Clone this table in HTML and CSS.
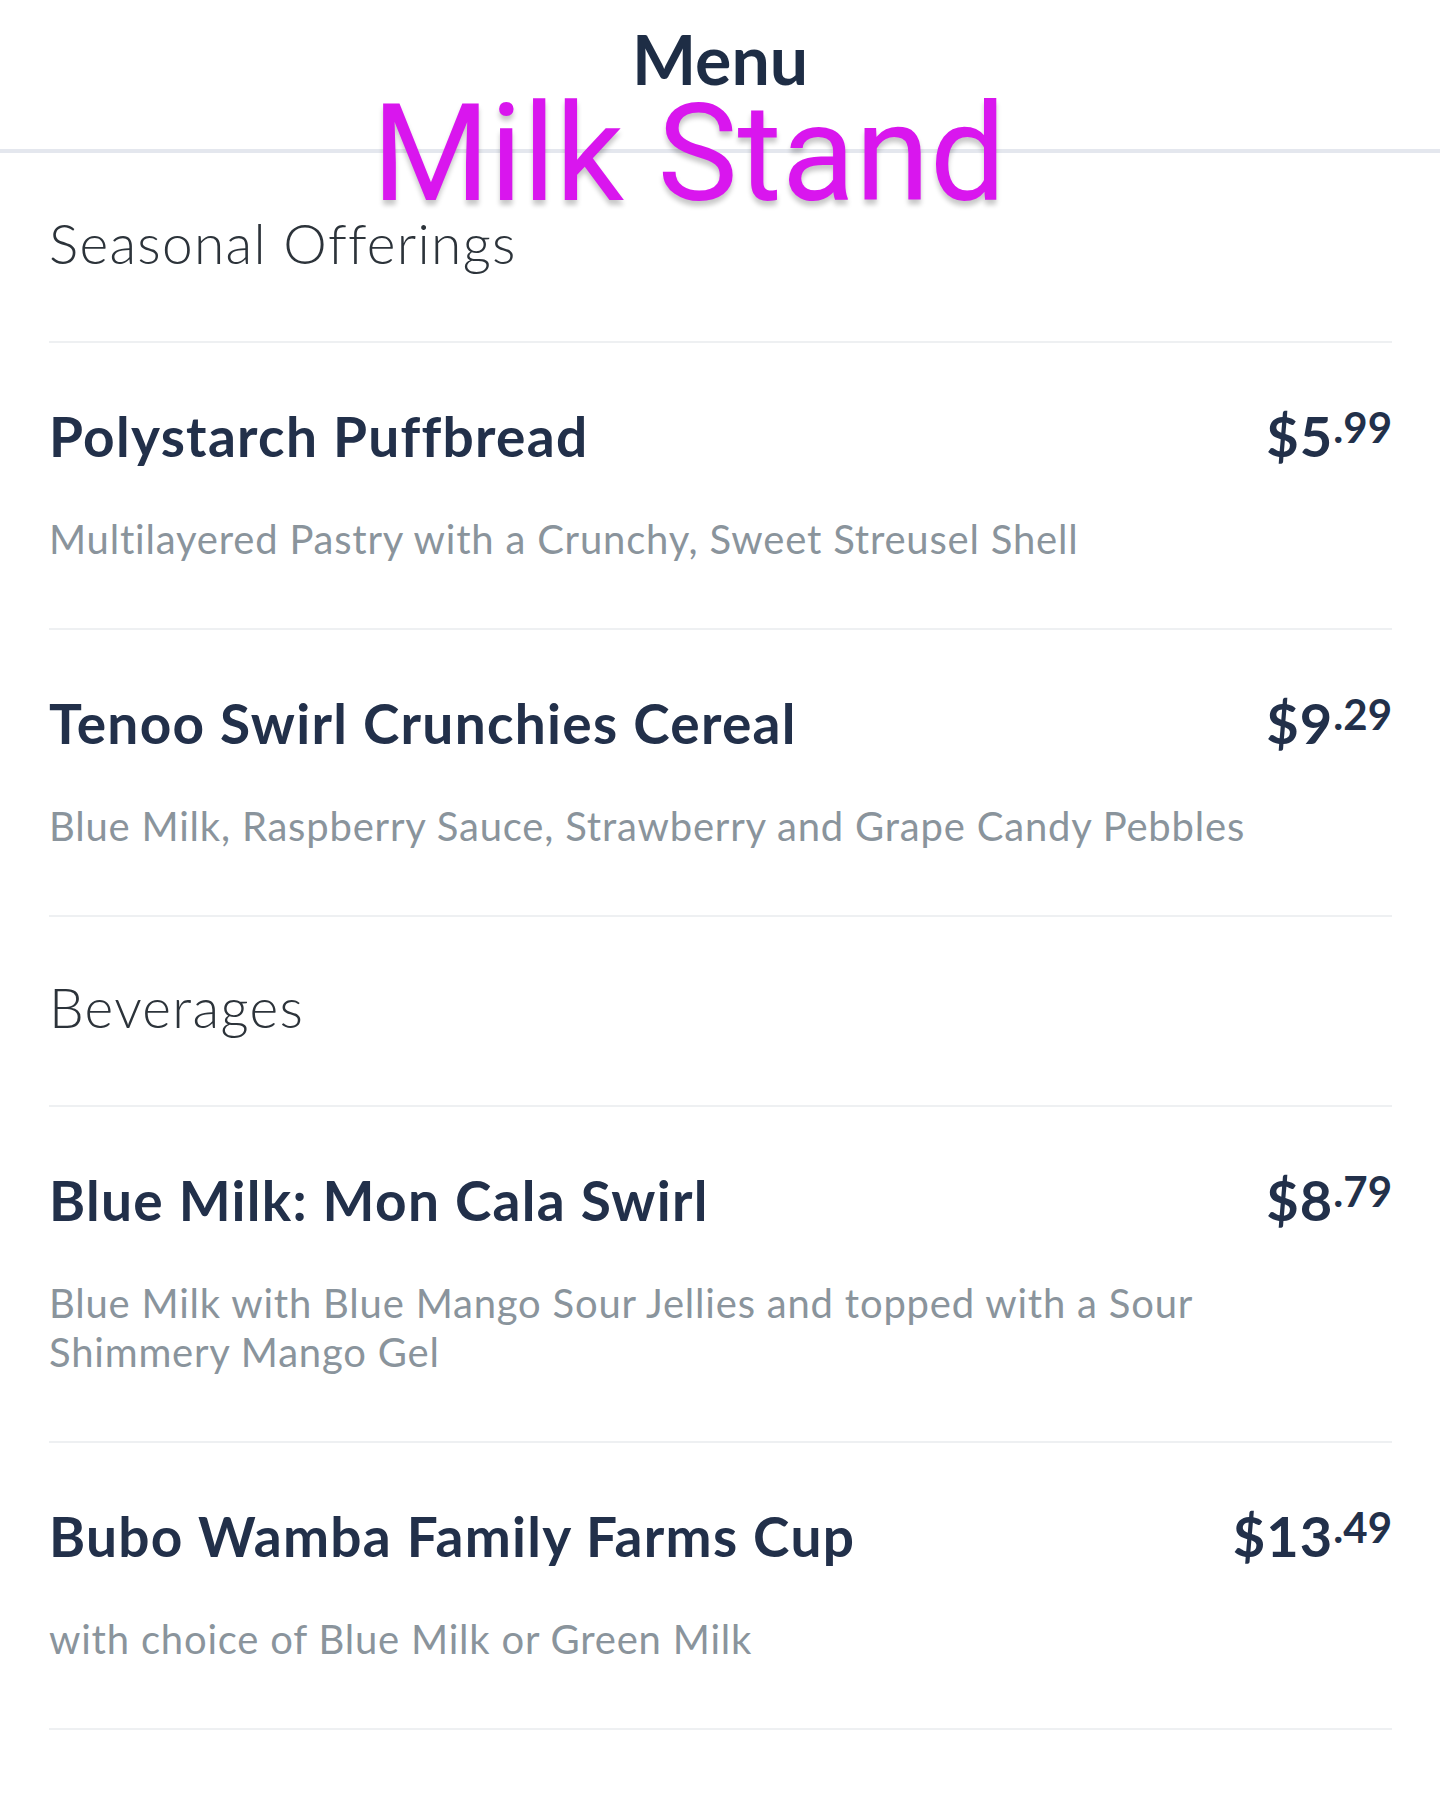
FILE: index.html
```html
<!DOCTYPE html>
<html lang="en">
<head>
<meta charset="utf-8">
<title>Menu - Milk Stand</title>
<link rel="stylesheet" href="styles.css">
</head>
<body>
<header class="topbar">
  <h1 class="title">Menu</h1>
  <div class="sticker">Milk Stand</div>
</header>
<main class="menu">
  <section>
    <h2 class="section-head">Seasonal Offerings</h2>
    <div class="item">
      <div class="item-row">
        <h3 class="item-name">Polystarch Puffbread</h3>
        <div class="price">$5<span class="cents">.99</span></div>
      </div>
      <p class="item-desc">Multilayered Pastry with a Crunchy, Sweet Streusel Shell</p>
    </div>
    <div class="item">
      <div class="item-row">
        <h3 class="item-name">Tenoo Swirl Crunchies Cereal</h3>
        <div class="price">$9<span class="cents">.29</span></div>
      </div>
      <p class="item-desc">Blue Milk, Raspberry Sauce, Strawberry and Grape Candy Pebbles</p>
    </div>
  </section>
  <section>
    <h2 class="section-head">Beverages</h2>
    <div class="item">
      <div class="item-row">
        <h3 class="item-name">Blue Milk: Mon Cala Swirl</h3>
        <div class="price">$8<span class="cents">.79</span></div>
      </div>
      <p class="item-desc">Blue Milk with Blue Mango Sour Jellies and topped with a Sour Shimmery Mango Gel</p>
    </div>
    <div class="item">
      <div class="item-row">
        <h3 class="item-name">Bubo Wamba Family Farms Cup</h3>
        <div class="price">$13<span class="cents">.49</span></div>
      </div>
      <p class="item-desc">with choice of Blue Milk or Green Milk</p>
    </div>
  </section>
</main>
</body>
</html>
```
FILE: styles.css
```css
* { box-sizing: border-box; }
html, body { margin: 0; padding: 0; background: #ffffff; }
body {
  font-family: Lato, "Open Sans", sans-serif;
  color: #22304a;
}
.topbar {
  position: relative;
  height: 153px;
  border-bottom: 4px solid #e4e7ee;
  display: flex;
  justify-content: center;
}
.title {
  margin: 0;
  padding-top: 18px;
  font-family: Lato, sans-serif;
  font-weight: 700;
  font-size: 68px;
  line-height: 82px;
  color: #1e2d45;
}
.sticker {
  position: absolute;
  left: 372px;
  top: 87px;
  font-family: Roboto, sans-serif;
  font-weight: 400;
  font-size: 135px;
  line-height: 1;
  color: #d916ee;
  text-shadow: 0 5px 5px rgba(0, 0, 0, 0.22);
  white-space: nowrap;
}
.menu {
  padding: 0 48px 0 49px;
}
.section-head {
  margin: 0;
  padding: 58px 0 66px;
  font-size: 55px;
  line-height: 64px;
  font-weight: 300;
  letter-spacing: 1.3px;
  color: #2c333a;
  border-bottom: 2px solid #eef0f2;
}
.item {
  padding: 51px 0 64px;
  border-bottom: 2px solid #eef0f2;
}
.item-row {
  display: flex;
  justify-content: space-between;
  align-items: baseline;
}
.item-name {
  margin: 0;
  font-size: 55px;
  line-height: 66px;
  font-weight: 700;
  letter-spacing: 1.3px;
  color: #22304a;
}
.price {
  font-size: 56px;
  line-height: 66px;
  font-weight: 700;
  letter-spacing: 1px;
  color: #22304a;
}
.cents {
  font-size: 42px;
  letter-spacing: 0;
  vertical-align: 14px;
}
.item-desc {
  margin: 46px 0 0;
  max-width: 1260px;
  font-size: 40px;
  line-height: 49px;
  font-weight: 400;
  letter-spacing: 0.8px;
  color: #8a949c;
}
```
